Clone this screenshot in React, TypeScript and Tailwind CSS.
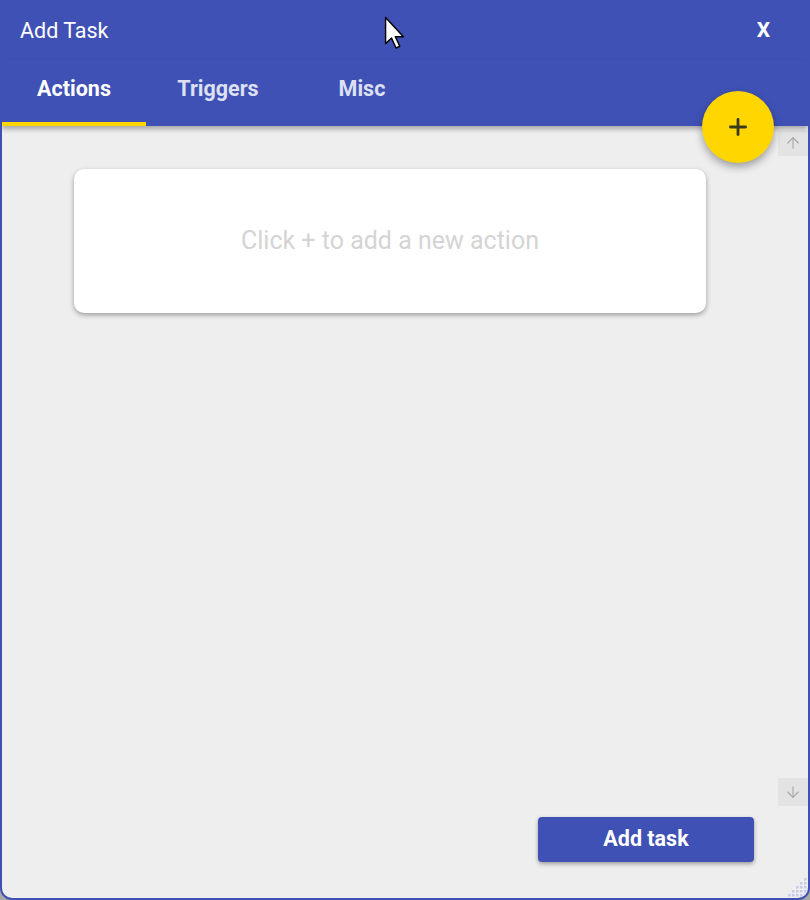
import { ArrowUp, ArrowDown, Plus } from "lucide-react"

const tabs = ["Actions", "Triggers", "Misc"]

function Cursor() {
  return (
    <svg className="absolute left-[384px] top-[16px]" width="23" height="34" viewBox="0 0 16 24">
      <path d="M1 1 L1 19.5 L5.2 15.6 L8.4 22.6 L11 21.4 L7.9 14.6 L13.6 14.6 Z" fill="white" stroke="black" strokeWidth="1" strokeLinejoin="round" />
    </svg>
  )
}

function Grip() {
  const dots: [number, number][] = []
  for (let r = 0; r < 5; r++) {
    for (let c = 4 - r; c < 5; c++) dots.push([c * 4 + 2, r * 4 + 2])
  }
  return (
    <svg className="absolute bottom-[1px] right-[1px]" width="20" height="20" viewBox="0 0 20 20">
      {dots.map(([x, y], i) => (
        <rect key={i} x={x - 1} y={y - 1} width="2.5" height="2.5" fill="#c5cae9" />
      ))}
    </svg>
  )
}

export default function App() {
  return (
    <div className="h-[900px] w-[810px] bg-[#a8a8a8]" style={{ fontFamily: "Roboto, 'Noto Sans', sans-serif" }}>
      <div className="relative flex h-full w-full flex-col overflow-hidden rounded-b-[12px] border-2 border-[#3f51b5] bg-[#eeeeee]">
        {/* Title bar */}
        <div className="flex h-[58px] items-center justify-between bg-[#3f51b5] pl-[18px] pr-[38px] text-white">
          <span className="text-[21.5px]">Add Task</span>
          <span className="text-[21px] font-bold">X</span>
        </div>

        {/* Tabs */}
        <div className="relative z-10 flex h-[66px] bg-[#3f51b5] shadow-[0_3px_5px_rgba(0,0,0,0.3)]">
          {tabs.map((t, i) => (
            <div key={t} className="relative flex w-[144px] items-center justify-center pb-[8px]">
              <span className={`text-[21.5px] font-bold ${i === 0 ? "text-white" : "text-[#dde0f2]"}`}>{t}</span>
              {i === 0 && <div className="absolute bottom-0 left-0 right-0 h-[4px] bg-[#ffd600]" />}
            </div>
          ))}
        </div>

        {/* Scroll area */}
        <div className="flex min-h-0 flex-1">
          <div className="flex-1 px-[72px] pt-[43px]">
            <div className="flex h-[144px] items-center justify-center rounded-[10px] bg-white shadow-[0_2px_5px_rgba(0,0,0,0.35)]">
              <span className="text-[25px] text-[#d4d4d4]">Click + to add a new action</span>
            </div>
          </div>
          <div className="flex w-[30px] flex-col justify-between pb-[2px] pt-[4px]">
            <div className="flex h-[26px] items-center justify-center bg-[#e3e3e3]">
              <ArrowUp size={18} strokeWidth={1.5} className="text-[#a8a8a8]" />
            </div>
            <div className="flex h-[28px] items-center justify-center bg-[#e3e3e3]">
              <ArrowDown size={18} strokeWidth={1.5} className="text-[#a8a8a8]" />
            </div>
          </div>
        </div>

        {/* Footer */}
        <div className="flex h-[90px] justify-end pr-[54px] pt-[9px]">
          <button className="h-[45px] w-[216px] rounded-[4px] bg-[#3f51b5] text-[21.5px] font-bold text-white shadow-[0_2px_4px_rgba(0,0,0,0.35)]">
            Add task
          </button>
        </div>

        {/* FAB */}
        <div className="absolute left-[700px] top-[89px] z-20 flex h-[72px] w-[72px] items-center justify-center rounded-full bg-[#ffd600] shadow-[0_4px_8px_rgba(0,0,0,0.35)]">
          <Plus size={26} strokeWidth={2.6} className="text-[#3a3a1a]" />
        </div>

        <Grip />
      </div>
      <Cursor />
    </div>
  )
}
